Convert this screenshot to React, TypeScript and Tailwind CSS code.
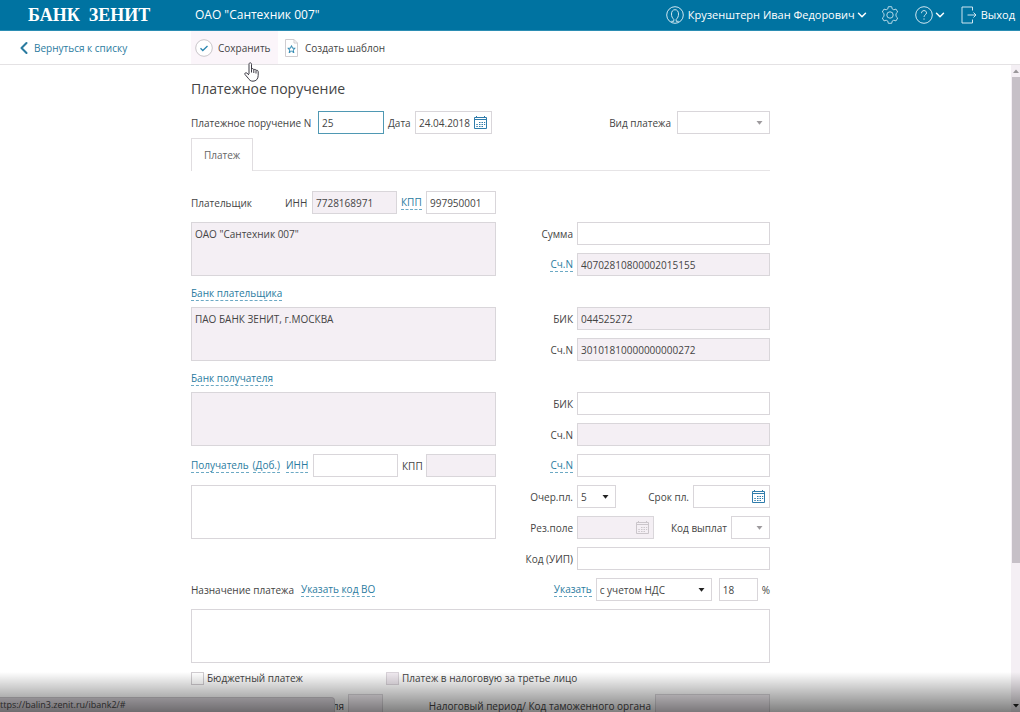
import React from 'react';
import { ChevronDown, ChevronLeft } from 'lucide-react';
import clsx from 'clsx';

const controlBase = 'h-[23px] border px-[3px] text-[10px] text-[#444] outline-none rounded-none';

interface FieldProps {
  label: string;
  value?: string;
  disabled?: boolean;
  active?: boolean;
  className?: string;
}

const Field: React.FC<FieldProps> = ({ label, value = '', disabled, active, className }) => (
  <input
    type="text"
    aria-label={label}
    defaultValue={value}
    readOnly={disabled}
    className={clsx(
      controlBase,
      disabled ? 'bg-[#f4eff4]' : 'bg-white',
      active ? 'border-[#4f98b3]' : 'border-[#d9d6da]',
      className
    )}
  />
);

const Area: React.FC<FieldProps> = ({ label, value = '', disabled, className }) => (
  <textarea
    aria-label={label}
    defaultValue={value}
    readOnly={disabled}
    className={clsx(
      'block h-[54px] w-full resize-none border border-[#d9d6da] p-[3px] text-[10px] leading-4 text-[#444] outline-none',
      disabled ? 'bg-[#f4eff4]' : 'bg-white',
      className
    )}
  />
);

interface SelectFieldProps {
  label: string;
  value?: string;
  muted?: boolean;
  className?: string;
}

const SelectField: React.FC<SelectFieldProps> = ({ label, value = '', muted, className }) => (
  <span className={clsx('relative block', className)}>
    <select
      aria-label={label}
      defaultValue={value}
      className={clsx(controlBase, 'block w-full appearance-none border-[#d9d6da] bg-white')}
    >
      <option value={value}>{value}</option>
    </select>
    <svg
      className={clsx('pointer-events-none absolute right-[7px] top-[10px]', muted ? 'text-[#9d9a9d]' : 'text-[#222]')}
      width="7"
      height="4"
      viewBox="0 0 7 4"
      fill="currentColor"
    >
      <path d="M0.5 0h6L3.5 3.8z" />
    </svg>
  </span>
);

const CalendarIcon: React.FC = () => (
  <svg width="13" height="13" viewBox="0 0 13 13" fill="none" stroke="currentColor">
    <path d="M0.5 1.5h12v11h-12zM0.5 3.5h12" />
    <path d="M2.5 0v2M10.5 0v2" />
    <path d="M5 6.5h1.5M7.5 6.5H9M10 6.5h1.2M2.3 8.5h1.5M5 8.5h1.5M7.5 8.5H9M10 8.5h1.2M2.3 10.5h1.5M5 10.5h1.5M7.5 10.5H9" />
  </svg>
);

const DateField: React.FC<FieldProps> = ({ label, value = '', disabled, className }) => (
  <span
    className={clsx(
      'flex h-[23px] items-center border border-[#d9d6da] pl-[3px] pr-1',
      disabled ? 'bg-[#f4eff4] text-[#cbc6cb]' : 'bg-white text-[#2f7cab]',
      className
    )}
  >
    <input
      type="text"
      aria-label={label}
      defaultValue={value}
      readOnly={disabled}
      className="w-0 flex-1 bg-transparent text-[10px] text-[#444] outline-none"
    />
    <button type="button" aria-label={`${label}: календарь`} disabled={disabled}>
      <CalendarIcon />
    </button>
  </span>
);

const DashedLink: React.FC<{ children: React.ReactNode; className?: string }> = ({ children, className }) => (
  <a href="#" className={clsx('border-b border-dashed border-[#6ba9c4] leading-[14px] text-[#2a7ba0]', className)}>
    {children}
  </a>
);

// Right-hand line: caption flush against the control
const Line: React.FC<{ caption: string; link?: boolean; children: React.ReactNode }> = ({ caption, link, children }) => (
  <div className="flex h-[23px] items-center justify-end gap-1">
    {link ? <DashedLink>{caption}</DashedLink> : <span>{caption}</span>}
    <div className="flex w-[193px] items-center">{children}</div>
  </div>
);

const Header: React.FC = () => (
  <header className="flex h-[31px] shrink-0 items-center border-b border-[#2b8db3] bg-[#0073a1] pb-px pr-[5px] text-[11px] text-white">
    <div className="w-[195px] shrink-0 pl-7 font-['Liberation_Serif',serif] text-[18px] leading-6 font-bold">
      БАНК&nbsp; ЗЕНИТ
    </div>
    <span className="text-[12px]">ОАО "Сантехник 007"</span>
    <div className="ml-auto flex items-center">
      <button type="button" className="flex items-center">
        <svg className="mr-1" width="18" height="18" viewBox="0 0 18 18" fill="none" stroke="#cfe6f0">
          <circle cx="9" cy="9" r="8.3" />
          <path d="M5.2 15.3h2.6v-2C6.3 12 5.5 10.5 5.5 8c0-2.6 1.3-4.3 3.5-4.3s3.5 1.700 3.5 4.300c0 2.500-0.800 4-2.300 5.300v2h2.600" />
        </svg>
        Крузенштерн Иван Федорович
        <ChevronDown size={14} strokeWidth={2.5} />
      </button>
      <button type="button" aria-label="Настройки" className="ml-3">
        <svg width="18" height="18" viewBox="0 0 18 18" fill="none" stroke="#b5d9e8">
          <path d="M7.3 0.7h3.4l0.500 2.200 1.600 0.900 2.200-0.700 1.700 2.900-1.700 1.600v2.800l1.700 1.600-1.700 2.900-2.200-0.700-1.600 0.900-0.500 2.200H7.300l-0.500-2.200-1.600-0.900-2.200 0.700-1.700-2.900 1.700-1.600V7.600L1.300 6 3 3.100l2.200 0.700 1.600-0.900z" />
          <circle cx="9" cy="9" r="3.2" />
        </svg>
      </button>
      <button type="button" aria-label="Помощь" className="ml-4 flex items-center">
        <svg width="18" height="18" viewBox="0 0 18 18" fill="none" stroke="#cfe6f0">
          <circle cx="9" cy="9" r="8.3" />
          <path d="M6.5 7.2c0-1.600 1-2.600 2.500-2.600s2.500 0.900 2.500 2.300c0 1.900-2.500 2-2.500 4M9 12.400v1.300" />
        </svg>
        <ChevronDown size={14} strokeWidth={2.5} />
      </button>
      <a href="#" className="ml-3.5 flex items-center gap-1">
        <svg width="16" height="18" viewBox="0 0 16 18" fill="none" stroke="#cfe6f0">
          <path d="M11.500 4.500V1H1v16h10.500v-3.500M6.500 9h8.500M12.500 6.500L15 9l-2.500 2.500" />
        </svg>
        Выход
      </a>
    </div>
  </header>
);

const Toolbar: React.FC = () => (
  <nav className="relative flex h-[34px] shrink-0 items-center border-b border-[#e4e2e4] bg-white">
    <div className="w-[191px] shrink-0 pl-[14px]">
      <a href="#" className="flex items-center text-[#2a7ba0]">
        <ChevronLeft size={20} strokeWidth={2.5} />
        Вернуться к списку
      </a>
    </div>
    <button type="button" className="flex h-[33px] w-[87px] items-center gap-[5px] bg-[#fbf5fa] pl-1">
      <svg width="18" height="18" viewBox="0 0 18 18" fill="none">
        <circle cx="9" cy="9" r="8.3" fill="#fff" stroke="#c9c5c9" />
        <path d="M5.5 9.2l2.3 2.3 4.7-4.5" stroke="#2a86b0" strokeWidth="1.3" />
      </svg>
      Сохранить
    </button>
    <button type="button" className="ml-[7px] flex items-center gap-[7px]">
      <svg width="13" height="18" viewBox="0 0 13 18" fill="none">
        <path d="M0.5 0.5h8.5l3.5 3.5v13.5H0.5zM9 0.5V4h3.5" stroke="#d0cdd0" />
        <path d="M6.5 6.6l1 2.6 2.7 0.1-2.1 1.700 0.800 2.700-2.400-1.500-2.400 1.500 0.800-2.700-2.100-1.700 2.700-0.100z" stroke="#2a86b0" />
      </svg>
      Создать шаблон
    </button>
    {/* hand pointer over the toolbar */}
    <svg className="pointer-events-none absolute left-[244px] top-[31px] z-10" width="15" height="20" viewBox="0 0 15 20">
      <path
        d="M5 12V2.300C5 0.300 7.500 0.300 7.500 2.300V7.500C7.700 6.200 9.800 6.300 9.800 8C10.200 6.900 12 7.100 12 8.700C12.500 7.900 14.200 8.100 14.200 9.800V13.500C14.200 17 12 19.200 9 19.200C6.500 19.200 5.400 18 4.200 16.200L1 12.500C0.300 11.200 1.700 10.200 2.900 11.100L5 13"
        fill="#fff"
        stroke="#3c3a44"
        strokeLinejoin="round"
      />
      <path d="M7.5 7.5v3M9.800 8v3M12 9v2.500" stroke="#3c3a44" fill="none" />
    </svg>
  </nav>
);

const PaymentForm: React.FC = () => (
  <form className="ml-[191px] flex w-full max-w-[579px] shrink-0 flex-col pt-3">
    <h1 className="text-[14px] leading-6">Платежное поручение</h1>

    <div className="mt-2.5 flex h-[23px] items-center">
      <span className="w-[127px] whitespace-nowrap">Платежное поручение N</span>
      <Field label="Платежное поручение N" value="25" active className="w-[66px]" />
      <span className="ml-1 w-[27px]">Дата</span>
      <DateField label="Дата" value="24.04.2018" className="w-[77px]" />
      <span className="ml-auto mr-1.5">Вид платежа</span>
      <SelectField label="Вид платежа" muted className="w-[93px]" />
    </div>

    <div className="mt-1 flex h-[33px] border-b border-[#e6e4e6]">
      <button type="button" className="-mb-px w-[62px] border border-b-0 border-[#e0dde0] bg-white text-[#666]">
        Платеж
      </button>
    </div>

    <div className="mt-5 flex h-[23px] items-center">
      <span className="w-[94px]">Плательщик</span>
      <span className="w-[27px]">ИНН</span>
      <Field label="ИНН плательщика" value="7728168971" disabled className="w-[85px]" />
      <span className="flex w-[29px] pl-1">
        <DashedLink>КПП</DashedLink>
      </span>
      <Field label="КПП плательщика" value="997950001" className="w-[70px]" />
    </div>

    <div className="mt-2 grid grid-cols-[305px_1fr]">
      <Area label="Плательщик" value={'ОАО "Сантехник 007"'} disabled />
      <div className="flex flex-col gap-2">
        <Line caption="Сумма">
          <Field label="Сумма" className="w-full" />
        </Line>
        <Line caption="Сч.N" link>
          <Field label="Счет плательщика" value="40702810800002015155" disabled className="w-full" />
        </Line>
      </div>
    </div>

    <div className="flex h-[31px] items-center pt-1">
      <DashedLink>Банк плательщика</DashedLink>
    </div>
    <div className="grid grid-cols-[305px_1fr]">
      <Area label="Банк плательщика" value="ПАО БАНК ЗЕНИТ, г.МОСКВА" disabled />
      <div className="flex flex-col gap-2">
        <Line caption="БИК">
          <Field label="БИК банка плательщика" value="044525272" disabled className="w-full" />
        </Line>
        <Line caption="Сч.N">
          <Field label="Счет банка плательщика" value="30101810000000000272" disabled className="w-full" />
        </Line>
      </div>
    </div>

    <div className="flex h-[31px] items-center pt-1">
      <DashedLink>Банк получателя</DashedLink>
    </div>
    <div className="grid grid-cols-[305px_1fr]">
      <Area label="Банк получателя" disabled />
      <div className="flex flex-col gap-2">
        <Line caption="БИК">
          <Field label="БИК банка получателя" className="w-full" />
        </Line>
        <Line caption="Сч.N">
          <Field label="Счет банка получателя" disabled className="w-full" />
        </Line>
      </div>
    </div>

    <div className="mt-2 grid grid-cols-[305px_1fr] gap-y-2">
      <div className="flex h-[23px] items-center">
        <span className="flex w-[122px] items-center">
          <DashedLink>Получатель</DashedLink>
          <DashedLink className="ml-1">(Доб.)</DashedLink>
          <DashedLink className="ml-1.5">ИНН</DashedLink>
        </span>
        <Field label="ИНН получателя" className="w-[85px]" />
        <span className="w-7 pl-1">КПП</span>
        <Field label="КПП получателя" disabled className="w-[70px]" />
      </div>
      <Line caption="Сч.N" link>
        <Field label="Счет получателя" className="w-full" />
      </Line>
      <Area label="Получатель" />
      <div className="flex flex-col gap-2">
        <Line caption="Очер.пл.">
          <SelectField label="Очередность платежа" value="5" className="w-[39px]" />
          <span className="ml-auto mr-1">Срок пл.</span>
          <DateField label="Срок платежа" className="w-[77px]" />
        </Line>
        <Line caption="Рез.поле">
          <DateField label="Резервное поле" disabled className="w-[77px]" />
          <span className="ml-auto mr-1">Код выплат</span>
          <SelectField label="Код выплат" muted className="w-[39px]" />
        </Line>
        <Line caption="Код (УИП)">
          <Field label="Код (УИП)" className="w-full" />
        </Line>
      </div>
    </div>

    <div className="mt-2 flex h-[23px] items-center">
      <span>Назначение платежа</span>
      <DashedLink className="ml-[7px]">Указать код ВО</DashedLink>
      <DashedLink className="ml-auto">Указать</DashedLink>
      <SelectField label="НДС" value="с учетом НДС" className="ml-1 w-[116px]" />
      <Field label="Ставка НДС" value="18" className="ml-[7px] w-[39px]" />
      <span className="ml-1">%</span>
    </div>
    <Area label="Назначение платежа" className="mt-2" />

    <div className="mt-[7px] flex h-4 items-center">
      <label className="flex w-[195px] items-center gap-[3px]">
        <input type="checkbox" className="size-[13px] appearance-none border border-[#d0ccd0] bg-white" />
        Бюджетный платеж
      </label>
      <label className="flex items-center gap-[3px]">
        <input type="checkbox" disabled className="size-[13px] appearance-none border border-[#d9d3d9] bg-[#f0eaf0]" />
        Платеж в налоговую за третье лицо
      </label>
    </div>

    <div className="mt-2 flex h-[23px] items-center">
      <span className="w-[157px] pr-1 text-right">ля</span>
      <Field label="Статус" disabled className="w-[35px]" />
      <span className="ml-auto mr-1">Налоговый период/ Код таможенного органа</span>
      <Field label="Налоговый период" disabled className="w-[115px]" />
    </div>
  </form>
);

const Scrollbar: React.FC = () => (
  <div className="flex w-[9px] shrink-0 flex-col bg-[#f4eff4]">
    <div className="flex h-3 shrink-0 items-center justify-center text-[#9a979a]">
      <svg width="6" height="4" viewBox="0 0 6 4" fill="currentColor">
        <path d="M0 4L3 0.500 6 4z" />
      </svg>
    </div>
    <div className="flex-1 pl-px">
      <div className="h-[78%] bg-[#c6c0c7]" />
    </div>
    <div className="flex h-3 shrink-0 items-center justify-center text-[#222]">
      <svg width="6" height="4" viewBox="0 0 6 4" fill="currentColor">
        <path d="M0 0L3 3.500 6 0z" />
      </svg>
    </div>
  </div>
);

const App: React.FC = () => {
  return (
    <div className="relative flex h-screen flex-col overflow-hidden bg-white font-['Open_Sans','Noto_Sans',sans-serif] text-[10px] leading-4 text-[#444]">
      <Header />
      <Toolbar />
      <main className="flex min-h-0 flex-1">
        <div className="flex min-w-0 flex-1 flex-col overflow-hidden">
          <PaymentForm />
        </div>
        <Scrollbar />
      </main>
      <div className="absolute bottom-0 left-0 h-[15px] w-[335px] rounded-tr-sm border-t border-r border-[#cbc7cc] bg-[#dcd7dd] text-[9px] leading-[14px] text-[#444]">
        ttps://balin3.zenit.ru/ibank2/#
      </div>
      <div className="pointer-events-none absolute inset-x-0 bottom-0 h-10 bg-linear-to-b from-transparent to-black/50" />
    </div>
  );
};

export default App;
